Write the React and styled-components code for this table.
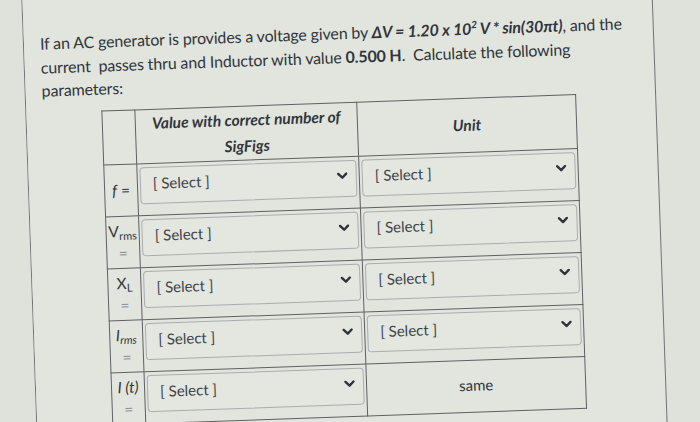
import React from 'react';
import styled, { createGlobalStyle } from 'styled-components';

const GlobalStyle = createGlobalStyle`
  html, body {
    margin: 0;
    background: #dfe1db;
    overflow: hidden;
  }
`

// the photo is tilted a little, so the whole sheet is turned
const Stage = styled.div`
  width: 700px;
  height: 422px;
  overflow: hidden;
  display: flex;
  align-items: center;
  justify-content: center;
  background: #dcdfd8;
`
const Sheet = styled.div`
  flex: none;
  width: 760px;
  height: 500px;
  display: flex;
  transform: rotate(-2deg);
  background: #dfe1db;
`
const Margin = styled.div`
  flex: none;
  width: ${p => p.$w}px;
`
const Rule = styled.div`
  flex: none;
  width: 1px;
  background: #6f7475;
`
const Panel = styled.div`
  flex: none;
  box-sizing: border-box;
  width: 629px;
  padding: 60px 0 0 16px;
  background: #e2e4de;
  font-family: Lato, "Open Sans", sans-serif;
  color: #30363b;
`
const Question = styled.p`
  margin: 0;
  font-size: 16px;
  line-height: 23.5px;
  letter-spacing: -0.15px;
`
const Strong = styled.b`
  font-weight: 700;
  font-style: ${p => (p.$italic ? 'italic' : 'normal')};
`
const Grid = styled.table`
  margin: 10px 0 0 59px;
  border-collapse: collapse;
  table-layout: fixed;
  width: 471px;
  font-size: 15px;
`
const Head = styled.th`
  height: 51px;
  padding: 0 0 1px;
  border: 1px solid #5d6163;
  font-weight: 700;
  font-style: italic;
  font-size: 15.5px;
  line-height: 26px;
  text-align: center;
  vertical-align: middle;
  width: ${p => p.$w}px;
`
const Label = styled.td`
  height: 51px;
  padding: 0;
  border: 1px solid #5d6163;
  text-align: center;
  vertical-align: middle;
  line-height: 22px;
  font-size: 15.5px;
`
const Cell = styled.td`
  height: 51px;
  box-sizing: border-box;
  padding: 3px 2px 0 2px;
  border: 1px solid #5d6163;
  vertical-align: top;
  text-align: ${p => (p.$center ? 'center' : 'left')};
  line-height: ${p => (p.$center ? '42px' : 'normal')};
`
const Eq = styled.div`
  color: ${p => (p.$faint ? '#8d9193' : '#30363b')};
`
const Sub = styled.sub`
  font-size: 11px;
  vertical-align: -3px;
  line-height: 0;
`
const Sup = styled.sup`
  font-size: 10px;
  line-height: 0;
`
const Select = styled.div`
  box-sizing: border-box;
  height: 37px;
  display: flex;
  align-items: center;
  justify-content: space-between;
  padding: 0 8px 5px 12px;
  border: 1px solid #a9aeae;
  border-radius: 4px;
  background: #e4e6e0;
  color: #3d4448;
  font-size: 15px;
`
const Chevron = () => (
  <svg width="11" height="8" viewBox="0 0 11 8">
    <polyline points="1.5,1.5 5.5,5.5 9.5,1.5" fill="none" stroke="#2e3438" strokeWidth="2.4" strokeLinecap="round" strokeLinejoin="round" />
  </svg>
)

function Dropdown() {
  return (
    <Select>
      <span>[ Select ]</span>
      <Chevron />
    </Select>
  )
}

const rows = [
  { label: <Eq><i>f</i> =</Eq>, unit: 'select' },
  { label: <><Eq>V<Sub>rms</Sub></Eq><Eq $faint>=</Eq></>, unit: 'select' },
  { label: <><Eq>X<Sub>L</Sub></Eq><Eq $faint>=</Eq></>, unit: 'select' },
  { label: <><Eq><i>I<Sub>rms</Sub></i></Eq><Eq $faint>=</Eq></>, unit: 'select' },
  { label: <><Eq><i>I (t)</i></Eq><Eq $faint>=</Eq></>, unit: 'same' },
]

export default function App() {
  return (
    <Stage>
      <GlobalStyle />
      <Sheet>
        <Margin $w={59} />
        <Rule />
        <Panel>
          <Question>
            If an AC generator is provides a voltage given by{' '}
            <Strong $italic>ΔV = 1.20 x 10<Sup>2</Sup> V * sin(30πt)</Strong>, and the
            <br />
            current&nbsp; passes thru and Inductor with value <Strong>0.500 H</Strong>.&nbsp; Calculate the following
            <br />
            parameters:
          </Question>
          <Grid>
            <thead>
              <tr>
                <Head $w={32} />
                <Head $w={221}>Value with correct number of<br />SigFigs</Head>
                <Head $w={218}>Unit</Head>
              </tr>
            </thead>
            <tbody>
              {rows.map((r, i) => (
                <tr key={i}>
                  <Label>{r.label}</Label>
                  <Cell><Dropdown /></Cell>
                  {r.unit === 'select'
                    ? <Cell><Dropdown /></Cell>
                    : <Cell $center>same</Cell>}
                </tr>
              ))}
            </tbody>
          </Grid>
        </Panel>
        <Rule />
        <Margin $w={70} />
      </Sheet>
    </Stage>
  );
}
